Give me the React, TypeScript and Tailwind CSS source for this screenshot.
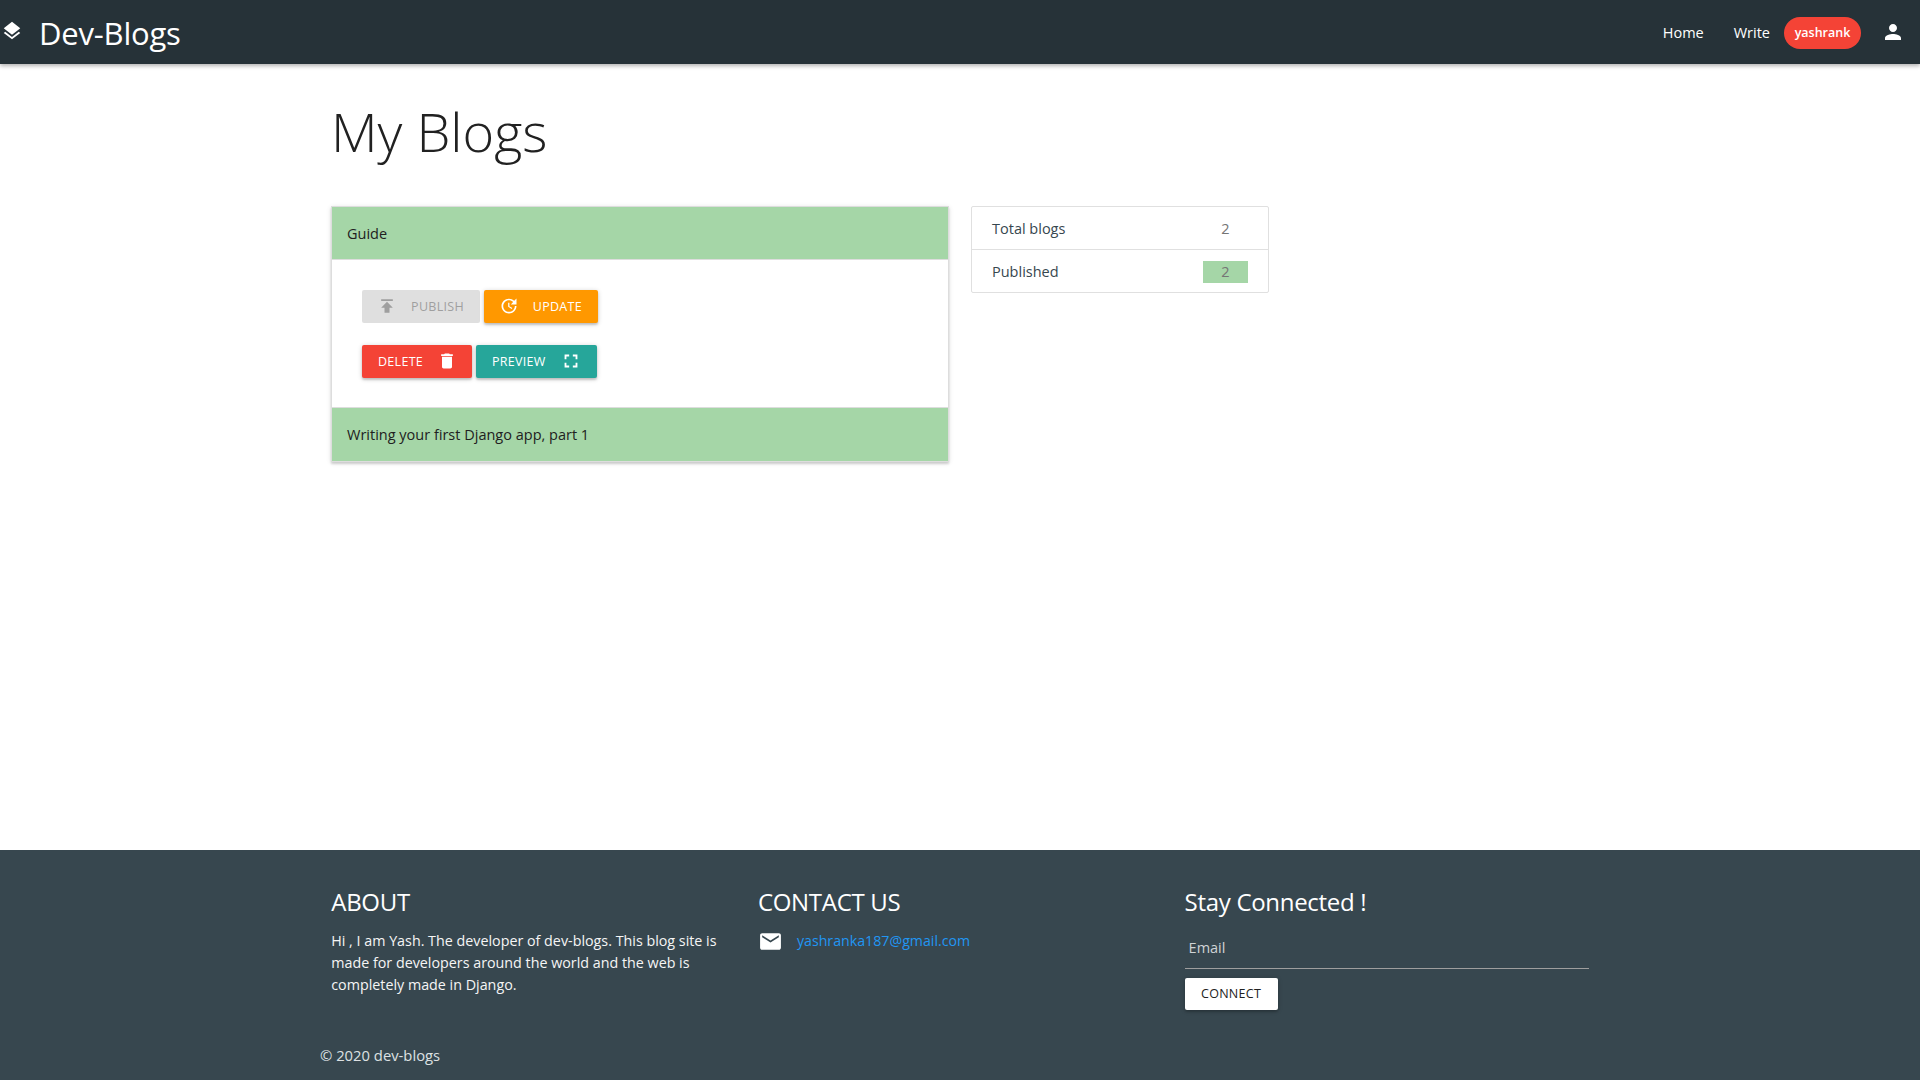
import type { ReactNode } from "react";

const font = "font-['Open_Sans','Noto_Sans',sans-serif]";

function MaterialIcon({ d, className }: { d: string; className?: string }) {
  return (
    <svg viewBox="0 0 24 24" fill="currentColor" className={className}>
      <path d={d} />
    </svg>
  );
}

const icons = {
  layers:
    "M11.99 18.54l-7.37-5.73L3 14.07l9 7 9-7-1.63-1.27-7.38 5.74zM12 16l7.36-5.73L21 9l-9-7-9 7 1.63 1.27L12 16z",
  person:
    "M12 12c2.21 0 4-1.79 4-4s-1.79-4-4-4-4 1.79-4 4 1.79 4 4 4zm0 2c-2.67 0-8 1.34-8 4v2h16v-2c0-2.66-5.33-4-8-4z",
  publish: "M5 4v2h14V4H5zm0 10h4v6h6v-6h4l-7-7-7 7z",
  update:
    "M21 10.12h-6.78l2.74-2.82c-2.73-2.7-7.15-2.8-9.88-.1-2.73 2.71-2.73 7.08 0 9.79s7.15 2.71 9.88 0C18.32 15.65 19 14.08 19 12.1h2c0 1.98-.88 4.55-2.64 6.29-3.51 3.48-9.21 3.48-12.72 0-3.5-3.47-3.53-9.11-.02-12.58s9.14-3.47 12.65 0L21 3v7.12zM12.5 8v4.25l3.5 2.08-.72 1.21L11 13V8h1.5z",
  trash:
    "M6 19c0 1.1.9 2 2 2h8c1.1 0 2-.9 2-2V7H6v12zM19 4h-3.5l-1-1h-5l-1 1H5v2h14V4z",
  fullscreen:
    "M7 14H5v5h5v-2H7v-3zm-2-4h2V7h3V5H5v5zm12 7h-3v2h5v-5h-2v3zM14 5v2h3v3h2V5h-5z",
  email:
    "M20 4H4c-1.1 0-1.99.9-1.99 2L2 18c0 1.1.9 2 2 2h16c1.1 0 2-.9 2-2V6c0-1.1-.9-2-2-2zm0 4l-8 5-8-5V6l8 5 8-5v2z",
};

function ActionButton({ className, children }: { className: string; children: ReactNode }) {
  return (
    <button
      className={`flex h-[33px] items-center justify-between rounded-[2px] px-4 text-[12.5px] tracking-[0.3px] uppercase ${className}`}
    >
      {children}
    </button>
  );
}

export default function App() {
  return (
    <div className={`flex min-h-screen flex-col bg-white ${font}`}>
      <nav className="z-10 flex h-16 items-center bg-[#263238] text-white shadow-[0_2px_4px_rgba(0,0,0,0.3)]">
        <MaterialIcon d={icons.layers} className="ml-px size-[22px] -translate-y-px" />
        <span className="ml-4 translate-y-px text-[31px] tracking-[-0.2px]">Dev-Blogs</span>
        <div className="ml-auto flex items-center pt-0.5 text-[14.5px]">
          <a className="mr-[30px]">Home</a>
          <a className="mr-[14px]">Write</a>
          <span className="flex h-8 w-[77px] items-center justify-center rounded-2xl bg-[#f44336] text-[12.5px] font-semibold">
            yashrank
          </span>
          <MaterialIcon d={icons.person} className="mr-[15px] ml-5 size-6 -translate-y-px" />
        </div>
      </nav>

      <main className="mx-auto w-[1280px] flex-1">
        <h1 className="mt-[35px] ml-[11px] text-[54px] leading-[64px] font-light text-[#212121]">
          My Blogs
        </h1>
        <div className="mt-[43px] flex items-start">
          <div className="mx-[11px] w-[618px] border border-[#ddd] text-[14.5px] text-[#212121] shadow-[0_2px_2px_rgba(0,0,0,0.14),0_1px_5px_rgba(0,0,0,0.12)]">
            <div className="flex h-[53px] items-center border-b border-[#ddd] bg-[#a5d6a7] px-[15px] pt-0.5">
              Guide
            </div>
            <div className="flex h-[148px] flex-col gap-[22px] border-b border-[#ddd] px-[30px] pt-[30px]">
              <div className="flex gap-1">
                <ActionButton className="w-[118px] bg-[#dfdfdf] pt-px text-[#9f9f9f]">
                  <MaterialIcon d={icons.publish} className="size-5 -translate-x-px -translate-y-px" />
                  <span>Publish</span>
                </ActionButton>
                <ActionButton className="w-[114px] bg-[#ff9800] pt-px text-white shadow-[0_2px_2px_rgba(0,0,0,0.14),0_1px_5px_rgba(0,0,0,0.2)]">
                  <MaterialIcon d={icons.update} className="size-5 -translate-x-px -translate-y-px" />
                  <span>Update</span>
                </ActionButton>
              </div>
              <div className="flex gap-1">
                <ActionButton className="w-[110px] bg-[#f44336] pt-px text-white shadow-[0_2px_2px_rgba(0,0,0,0.14),0_1px_5px_rgba(0,0,0,0.2)]">
                  <span>Delete</span>
                  <MaterialIcon d={icons.trash} className="size-5 translate-x-px -translate-y-px" />
                </ActionButton>
                <ActionButton className="w-[121px] bg-[#26a69a] pt-px text-white shadow-[0_2px_2px_rgba(0,0,0,0.14),0_1px_5px_rgba(0,0,0,0.2)]">
                  <span>Preview</span>
                  <MaterialIcon d={icons.fullscreen} className="size-[22px] translate-x-px -translate-y-px" />
                </ActionButton>
              </div>
            </div>
            <div className="flex h-[53px] items-center bg-[#a5d6a7] px-[15px]">
              Writing your first Django app, part 1
            </div>
          </div>

          <div className="ml-[11px] w-[298px] rounded-[2px] border border-[#e0e0e0] text-[14.5px] text-[#37474f]">
            <div className="flex h-[43px] items-center justify-between border-b border-[#e0e0e0] px-5 pt-0.5">
              <span>Total blogs</span>
              <span className="w-[45px] text-center text-[#757575]">2</span>
            </div>
            <div className="flex h-[42px] items-center justify-between px-5 pt-0.5">
              <span>Published</span>
              <span className="flex h-[22px] w-[45px] items-center justify-center bg-[#a5d6a7] text-[#757575]">
                2
              </span>
            </div>
          </div>
        </div>
      </main>

      <footer className="flex h-[230px] flex-col bg-[#37474f] text-white">
        <div className="mx-auto grid w-[1280px] grid-cols-3">
          <div className="px-[11.25px] pt-[35px]">
            <h5 className="text-[24px] leading-[34px] tracking-[-0.3px]">ABOUT</h5>
            <p className="mt-[11px] w-[400px] text-[14.3px] leading-[22px] text-[#f5f5f5]">
              Hi , I am Yash. The developer of dev-blogs. This blog site is made for developers
              around the world and the web is completely made in Django.
            </p>
          </div>
          <div className="px-[11.25px] pt-[35px]">
            <h5 className="text-[24px] leading-[34px] tracking-[-0.3px]">CONTACT US</h5>
            <div className="mt-[11px] flex h-[22px] items-center">
              <MaterialIcon d={icons.email} className="size-[25px]" />
              <a className="ml-[14px] text-[14.2px] text-[#2196f3]">yashranka187@gmail.com</a>
            </div>
          </div>
          <div className="px-[11.25px] pt-[35px]">
            <h5 className="text-[24px] leading-[34px] tracking-[-0.3px]">Stay Connected !</h5>
            <div className="mt-2 flex h-[42px] w-[404px] items-center border-b border-[#9e9e9e] pl-1 text-[14.5px] text-[#cfd3d5]">
              Email
            </div>
            <button className="mt-[9px] flex h-8 w-[93px] items-center justify-center rounded-[2px] bg-white text-[12.5px] tracking-[0.3px] text-[#212121] uppercase shadow-[0_2px_2px_rgba(0,0,0,0.14),0_1px_5px_rgba(0,0,0,0.2)]">
              Connect
            </button>
          </div>
        </div>
        <div className="mx-auto mt-auto mb-[14px] w-[1280px] text-[14.8px] text-[#dde1e3]">© 2020 dev-blogs</div>
      </footer>
    </div>
  );
}
